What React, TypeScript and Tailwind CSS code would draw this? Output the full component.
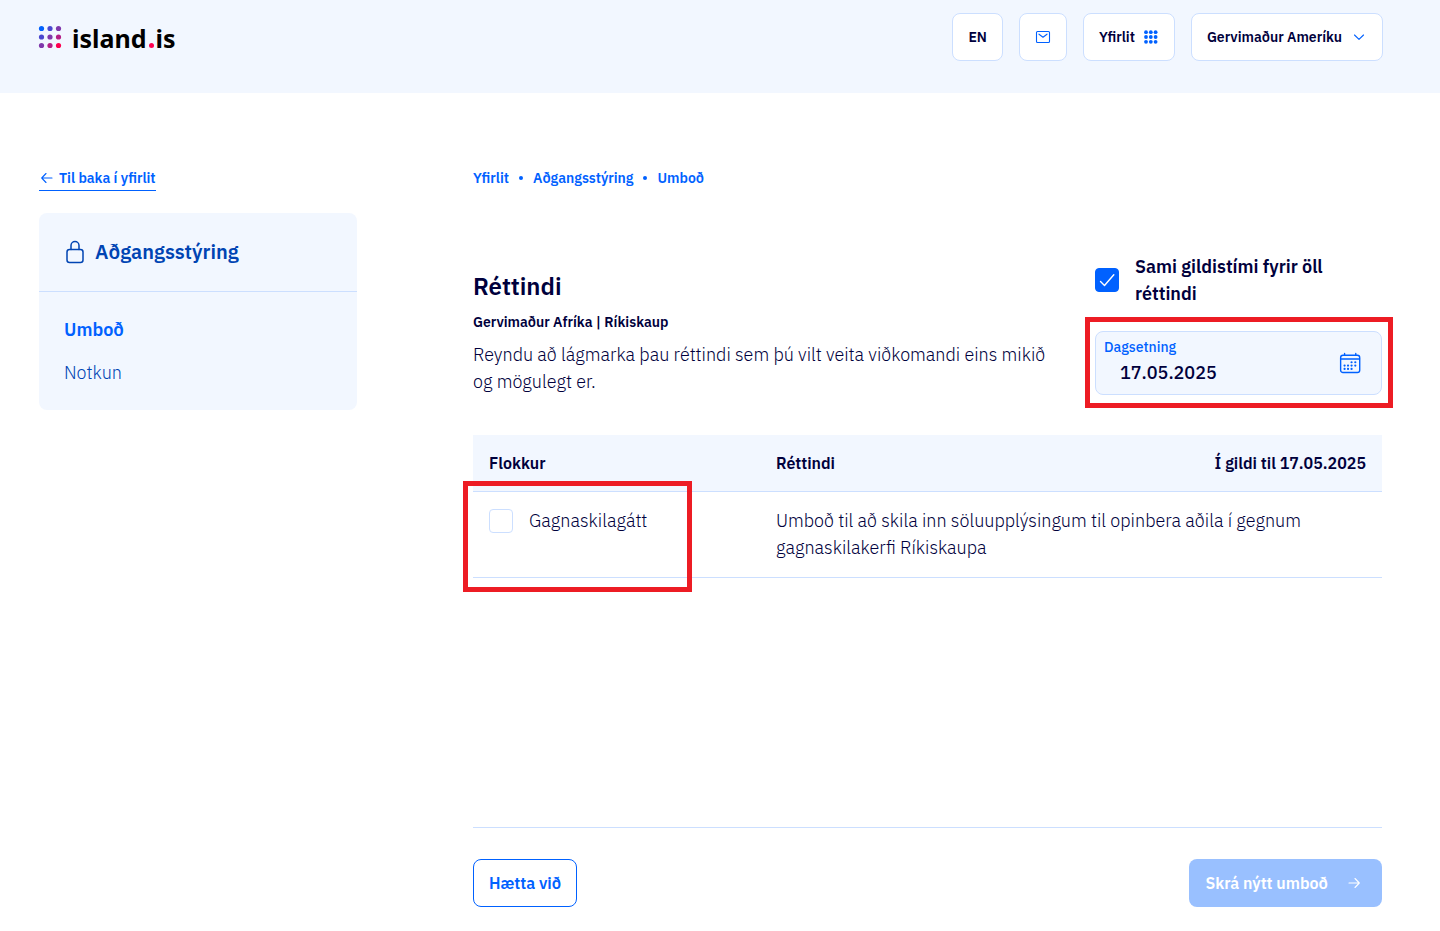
import {useState} from "react";
import type {ReactNode} from "react";

interface CheckboxProps {
    id: string,
    checked: boolean,
    onChange: (checked: boolean) => void
    label: string,
    strong?: boolean
}

const breadcrumbs = ["Yfirlit", "Aðgangsstýring", "Umboð"]

const logoDots = [
    "#0161fd", "#4a48cf", "#7f38ab",
    "#4a48cf", "#7f38ab", "#b41f86",
    "#7f38ab", "#b41f86", "#fd0050",
]

function Logo() {
    return (
        <a href="#" aria-label="island.is" className="flex items-center gap-2.5">
            <svg width="24" height="24" viewBox="0 0 24 24" className="-ml-px">
                {logoDots.map((color, i) => (
                    <circle
                        key={i}
                        cx={3.5 + (i % 3) * 8.5}
                        cy={3.5 + Math.floor(i / 3) * 8.5}
                        r="2.6"
                        fill={color}
                    />
                ))}
            </svg>
            <span className="flex items-baseline gap-0.5 pt-0.5 font-['Noto_Sans',sans-serif] text-[25px] leading-8 font-bold text-black">
                island
                <span className="size-[5px] rounded-full bg-[#ff0050]"/>
                is
            </span>
        </a>
    )
}

function HeaderButton({children, label}: { children: ReactNode, label?: string }) {
    return (
        <button
            aria-label={label}
            className="flex h-12 items-center gap-[9px] rounded-lg border border-[#ccdfff] bg-white px-[15px] text-sm font-semibold"
        >
            {children}
        </button>
    )
}

function Checkbox({id, checked, onChange, label, strong}: CheckboxProps) {
    return (
        <div className="flex items-center gap-4">
            <span className="relative size-6 shrink-0">
                <input
                    id={id}
                    type="checkbox"
                    checked={checked}
                    onChange={(e) => onChange(e.target.checked)}
                    className="block size-6 appearance-none rounded border border-[#ccdfff] bg-white checked:border-[#0061ff] checked:bg-[#0061ff]"
                />
                {checked && (
                    <svg
                        viewBox="0 0 24 24"
                        className="pointer-events-none absolute inset-0 size-6 fill-none stroke-white stroke-[1.4]"
                        strokeLinecap="round"
                        strokeLinejoin="round"
                    >
                        <path d="M5.5 13.5L9.5 17.5L18.8 6.8"/>
                    </svg>
                )}
            </span>
            <label htmlFor={id} className={strong ? "font-semibold" : "font-light"}>{label}</label>
        </div>
    )
}

function CalendarIcon() {
    return (
        <svg width="24" height="24" viewBox="0 0 24 24" fill="none" stroke="#0061ff" strokeWidth="1.5">
            <rect x="1.75" y="3.75" width="20.5" height="18.5" rx="2.5"/>
            <path d="M2 7.75H22M6 1.75V3.5M18 1.75V3.5" strokeLinecap="round"/>
            <g fill="#0061ff" stroke="none">
                {[[13.5, 11.2], [17.5, 11.2], [6, 14.7], [9.7, 14.7], [13.5, 14.7], [17.5, 14.7], [6, 18.4], [9.7, 18.4], [13.5, 18.4]].map(([x, y]) => (
                    <circle key={`${x}-${y}`} cx={x} cy={y} r="1.2"/>
                ))}
            </g>
        </svg>
    )
}

export default function App() {

    const [sameDate, setSameDate] = useState<boolean>(true)
    const [date, setDate] = useState<string>("17.05.2025")
    const [selected, setSelected] = useState<boolean>(false)

    return (
        <div className="min-h-screen bg-white font-['IBM_Plex_Sans','Noto_Sans',sans-serif] text-[#00003c]">
            <header className="flex items-start justify-between bg-[#f2f7ff] pt-[13px] pr-[57px] pb-8 pl-[39px]">
                <div className="flex h-12 items-center">
                    <Logo/>
                </div>
                <div className="flex gap-4">
                    <HeaderButton>EN</HeaderButton>
                    <HeaderButton label="Pósthólf">
                        <svg width="16" height="16" viewBox="0 0 16 16" fill="none" stroke="#0061ff" strokeWidth="1.1" strokeLinecap="round" strokeLinejoin="round">
                            <rect x="1.5" y="2.5" width="13" height="11" rx="1"/>
                            <path d="M4 5.2L8 8.2L12 5.2"/>
                        </svg>
                    </HeaderButton>
                    <HeaderButton>
                        Yfirlit
                        <svg width="15" height="16" viewBox="0 0 15 16" fill="#0061ff">
                            {logoDots.map((_, i) => (
                                <circle key={i} cx={2 + (i % 3) * 4.8} cy={3.2 + Math.floor(i / 3) * 4.8} r="1.9"/>
                            ))}
                        </svg>
                    </HeaderButton>
                    <HeaderButton>
                        Gervimaður Ameríku
                        <svg width="16" height="16" viewBox="0 0 16 16" fill="none" stroke="#0061ff" strokeWidth="1.1" strokeLinecap="round" strokeLinejoin="round">
                            <path d="M3.5 6L8 10.3L12.5 6"/>
                        </svg>
                    </HeaderButton>
                </div>
            </header>

            <div className="flex items-start gap-[116px] pt-[75px] pr-[58px] pb-6 pl-[39px]">
                <aside className="flex w-[318px] shrink-0 flex-col items-start">
                    <a
                        href="#"
                        className="flex items-center gap-1 border-b border-[#0061ff] pb-0.5 text-sm font-semibold text-[#0061ff]"
                    >
                        <svg width="16" height="16" viewBox="0 0 16 16" fill="none" stroke="currentColor" strokeWidth="1.1" strokeLinecap="round" strokeLinejoin="round">
                            <path d="M7 3.5L2.7 8L7 12.5M2.9 8H13"/>
                        </svg>
                        Til baka í yfirlit
                    </a>
                    <nav className="mt-[22px] w-full rounded-lg bg-[#f2f7ff]">
                        <div className="flex h-[79px] items-center gap-2 border-b border-[#ccdfff] px-6">
                            <svg width="24" height="24" viewBox="0 0 24 24" fill="none" stroke="#0044b3" strokeWidth="1.5" strokeLinecap="round">
                                <rect x="4" y="9.5" width="16" height="13" rx="2.5"/>
                                <path d="M8 9.5V5.5A4 4 0 0 1 16 5.5V9.5"/>
                            </svg>
                            <h2 className="text-xl font-semibold text-[#0044b3]">Aðgangsstýring</h2>
                        </div>
                        <ul className="flex flex-col gap-4 px-[25px] py-6 text-lg leading-[27px]">
                            <li><a href="#" className="font-semibold text-[#0061ff]">Umboð</a></li>
                            <li><a href="#" className="font-light text-[#0044b3]">Notkun</a></li>
                        </ul>
                    </nav>
                </aside>

                <main className="min-w-0 grow">
                    <nav className="flex items-center text-sm font-semibold text-[#0061ff]">
                        {breadcrumbs.map((crumb, i) => (
                            <span key={crumb} className="flex items-center">
                                {i > 0 && <span className="mx-2.5 size-1 rounded-full bg-[#0061ff]"/>}
                                <a href="#">{crumb}</a>
                            </span>
                        ))}
                    </nav>

                    <div className="mt-[65px] flex items-end justify-between gap-10">
                        <div>
                            <h1 className="text-2xl leading-[34px] font-semibold">Réttindi</h1>
                            <p className="mt-[9px] text-sm font-semibold">Gervimaður Afríka | Ríkiskaup</p>
                            <p className="mt-[9px] text-lg leading-[27px] font-light">
                                Reyndu að lágmarka þau réttindi sem þú vilt veita viðkomandi eins mikið og mögulegt er.
                            </p>
                        </div>
                        <div className="w-[287px] shrink-0 text-lg leading-[27px]">
                            <Checkbox
                                id="same-date"
                                checked={sameDate}
                                onChange={setSameDate}
                                label="Sami gildistími fyrir öll réttindi"
                                strong
                            />
                            <div className="relative mt-6 flex h-16 items-center justify-between rounded-lg border border-[#ccdfff] bg-[#f2f7ff] pr-5 pl-2">
                                <div className="min-w-0">
                                    <label htmlFor="date" className="block text-sm font-medium text-[#0061ff]">Dagsetning</label>
                                    <input
                                        id="date"
                                        value={date}
                                        onChange={(e) => setDate(e.target.value)}
                                        className="block w-full bg-transparent pl-4 text-lg leading-8 font-medium outline-none"
                                    />
                                </div>
                                <CalendarIcon/>
                                <div className="pointer-events-none absolute -top-[15px] -right-3 -bottom-[14px] -left-[11px] border-5 border-[#ed1c24]"/>
                            </div>
                        </div>
                    </div>

                    <table className="mt-10 w-full table-fixed text-left">
                        <thead>
                            <tr className="border-b border-[#ccdfff] bg-[#f2f7ff]">
                                <th className="w-[287px] p-4 font-semibold">Flokkur</th>
                                <th className="p-4 font-semibold">Réttindi</th>
                                <th className="p-4 text-right font-semibold">Í gildi til {date}</th>
                            </tr>
                        </thead>
                        <tbody>
                            <tr className="border-b border-[#ccdfff] align-top text-lg leading-[27px]">
                                <td className="relative px-4 pt-[15px] pb-4">
                                    <Checkbox
                                        id="gagnaskilagatt"
                                        checked={selected}
                                        onChange={setSelected}
                                        label="Gagnaskilagátt"
                                    />
                                    <div className="pointer-events-none absolute -top-[11px] -left-[10px] h-[111px] w-[229px] border-5 border-[#ed1c24]"/>
                                </td>
                                <td colSpan={2} className="px-4 pt-[15px] pb-4 font-light">
                                    Umboð til að skila inn söluupplýsingum til opinbera aðila í gegnum gagnaskilakerfi Ríkiskaupa
                                </td>
                            </tr>
                        </tbody>
                    </table>

                    <div className="mt-[249px] flex justify-between border-t border-[#ccdfff] pt-[31px]">
                        <button className="h-12 rounded-lg border border-[#0061ff] px-[15px] font-semibold text-[#0061ff]">
                            Hætta við
                        </button>
                        <button disabled className="flex h-12 items-center gap-[18px] rounded-lg bg-[#99c0ff] pr-5 pl-4 font-semibold text-white">
                            Skrá nýtt umboð
                            <svg width="16" height="16" viewBox="0 0 16 16" fill="none" stroke="currentColor" strokeWidth="1.1" strokeLinecap="round" strokeLinejoin="round">
                                <path d="M9 3.5L13.3 8L9 12.5M13.1 8H3"/>
                            </svg>
                        </button>
                    </div>
                </main>
            </div>
        </div>
    )
}
